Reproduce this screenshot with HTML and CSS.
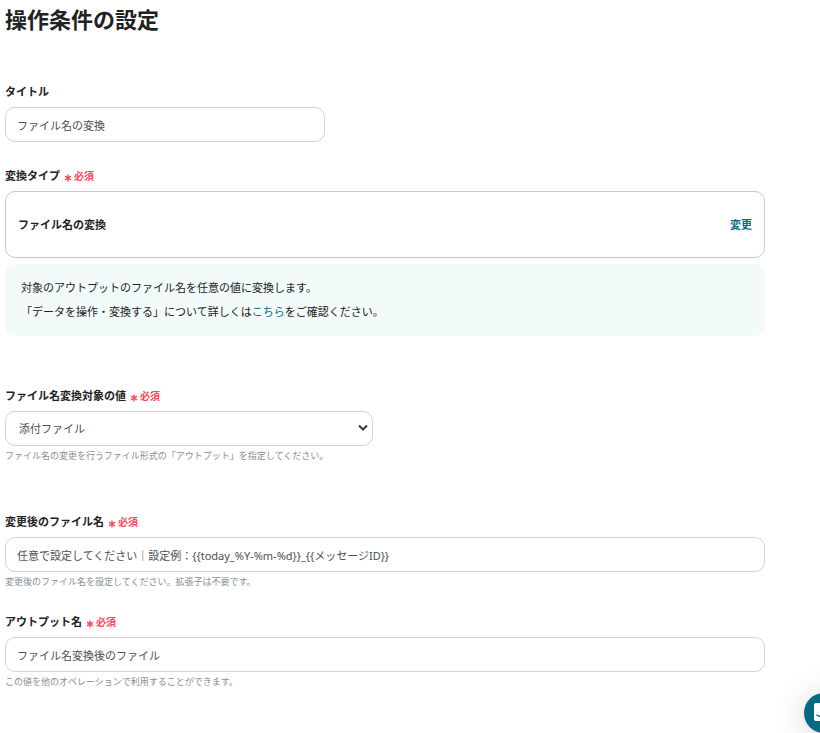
FILE: index.html
```
<!DOCTYPE html>
<html lang="ja">
<head>
<meta charset="utf-8">
<title>操作条件の設定</title>
<link rel="stylesheet" href="styles.css">
</head>
<body>
<main class="page">
  <h1 class="page-title">操作条件の設定</h1>
  <form class="form">
    <div class="field">
      <label class="label" for="title">タイトル</label>
      <input class="control control-short" id="title" type="text" value="ファイル名の変換">
    </div>
    <section class="field field-spaced">
      <h2 class="label">変換タイプ<span class="required"><svg class="asterisk" viewBox="0 0 8 8" aria-hidden="true"><path d="M4 .5v7M1 2.2l6 3.6M7 2.2L1 5.8"/></svg>必須</span></h2>
      <div class="type-card">
        <strong>ファイル名の変換</strong>
        <button class="change" type="button">変更</button>
      </div>
      <div class="info">
        <p>対象のアウトプットのファイル名を任意の値に変換します。</p>
        <p>「データを操作・変換する」について詳しくは<a href="#">こちら</a>をご確認ください。</p>
      </div>
    </section>
    <div class="field field-spaced">
      <label class="label" for="target">ファイル名変換対象の値<span class="required"><svg class="asterisk" viewBox="0 0 8 8" aria-hidden="true"><path d="M4 .5v7M1 2.2l6 3.6M7 2.2L1 5.8"/></svg>必須</span></label>
      <div class="select-wrap">
        <select class="control" id="target"><option>添付ファイル</option></select>
        <svg class="chevron" viewBox="0 0 10 8" aria-hidden="true"><path d="M1 1.5l4 4 4-4"/></svg>
      </div>
      <p class="hint">ファイル名の変更を行うファイル形式の「アウトプット」を指定してください。</p>
    </div>
    <div class="field">
      <label class="label" for="filename">変更後のファイル名<span class="required"><svg class="asterisk" viewBox="0 0 8 8" aria-hidden="true"><path d="M4 .5v7M1 2.2l6 3.6M7 2.2L1 5.8"/></svg>必須</span></label>
      <input class="control" id="filename" type="text" value="任意で設定してください｜設定例：{{today_%Y-%m-%d}}_{{メッセージID}}">
      <p class="hint">変更後のファイル名を設定してください。拡張子は不要です。</p>
    </div>
    <div class="field">
      <label class="label" for="output">アウトプット名<span class="required"><svg class="asterisk" viewBox="0 0 8 8" aria-hidden="true"><path d="M4 .5v7M1 2.2l6 3.6M7 2.2L1 5.8"/></svg>必須</span></label>
      <input class="control" id="output" type="text" value="ファイル名変換後のファイル">
      <p class="hint">この値を他のオペレーションで利用することができます。</p>
    </div>
  </form>
</main>
<button class="chat" type="button" aria-label="チャット">
  <svg viewBox="0 0 24 24" aria-hidden="true"><path fill="#fff" d="M4 2h16a2 2 0 0 1 2 2v19l-5-3H4a2 2 0 0 1-2-2V4a2 2 0 0 1 2-2z"/><path fill="none" stroke="#086a82" stroke-width="1.5" stroke-linecap="round" d="M5 14q7 5 14 0"/></svg>
</button>
</body>
</html>
```
FILE: styles.css
```
* { box-sizing: border-box; }
body {
  margin: 0;
  overflow-x: hidden;
  background: #fff;
  color: #222;
  font: 11px/16px "Noto Sans", "Noto Sans CJK JP", sans-serif;
}
.page { padding: 4px 55px 32px 5px; }
.page-title { margin: 0 0 50px; font-size: 22px; line-height: 30px; }
.form { display: flex; flex-direction: column; gap: 26px; }
.field-spaced { margin-bottom: 26px; }
.label {
  display: flex;
  align-items: center;
  gap: 4px;
  margin: 0 0 7px;
  font-size: 11px;
  font-weight: 700;
  line-height: 16px;
}
.required { display: flex; align-items: center; gap: 2px; color: #ff4557; font-size: 10px; }
.asterisk { width: 8px; height: 8px; margin-top: 3px; fill: none; stroke: currentColor; stroke-width: 1.4; }
.control {
  display: block;
  width: 100%;
  height: 35px;
  padding: 0 11px;
  border: 1px solid #cdd2dc;
  border-radius: 10px;
  background: #fff;
  color: #495057;
  font: inherit;
}
.control-short { max-width: 320px; }
.type-card {
  display: flex;
  align-items: center;
  justify-content: space-between;
  padding: 24px 12px;
  border: 1px solid #c8c8c8;
  border-radius: 10px;
  line-height: 17px;
}
.change { padding: 0; border: 0; background: none; color: #086a82; font: inherit; font-weight: 700; }
.info { margin-top: 6px; padding: 12px 16px; border-radius: 10px; background: #f2fafa; line-height: 24px; }
.info p { margin: 0; }
.info a { color: #086a82; text-decoration: none; }
.select-wrap { position: relative; max-width: 368px; }
.select-wrap .control { appearance: none; padding: 0 13px; }
.chevron {
  position: absolute;
  top: 13px;
  right: 5px;
  width: 10px;
  height: 8px;
  fill: none;
  stroke: #343a40;
  stroke-width: 2;
  pointer-events: none;
}
.hint { margin: 3px 0 0; color: #868e96; font-size: 9px; line-height: 13px; }
.chat {
  position: fixed;
  right: -24px;
  bottom: 0;
  width: 40px;
  height: 40px;
  padding: 8px;
  border: 0;
  border-radius: 50%;
  background: #086a82;
  box-shadow: 0 1px 6px rgba(0, 0, 0, .06), 0 2px 32px rgba(0, 0, 0, .16);
}
.chat svg { display: block; width: 100%; }
```
